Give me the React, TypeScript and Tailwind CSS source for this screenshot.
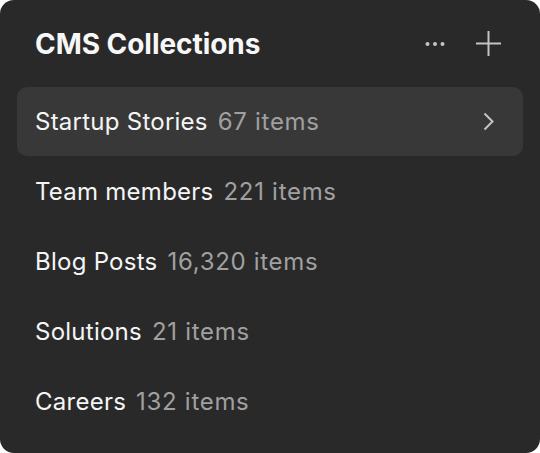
const collections = [
  { name: "Startup Stories", count: "67 items", active: true },
  { name: "Team members", count: "221 items" },
  { name: "Blog Posts", count: "16,320 items" },
  { name: "Solutions", count: "21 items" },
  { name: "Careers", count: "132 items" },
]

export default function App() {
  return (
    <div className="w-[540px] h-[453px] bg-white font-['Inter',sans-serif]">
      <div className="h-full w-full rounded-[14px] bg-[#292929] px-[17px]">
        {/* Header */}
        <div className="h-[87px] flex items-center justify-between pl-[18px] pr-[22px]">
          <h1 className="text-[28px] font-bold text-[#f7f7f7] tracking-[-0.05px]">CMS Collections</h1>
          <div className="flex items-center gap-[31px] text-[#c4c4c4]">
            <svg width="20" height="6" viewBox="0 0 20 6" fill="currentColor">
              <circle cx="2.5" cy="3" r="2" />
              <circle cx="10" cy="3" r="2" />
              <circle cx="17.5" cy="3" r="2" />
            </svg>
            <svg width="25" height="25" viewBox="0 0 25 25" stroke="currentColor" strokeWidth="2" fill="none">
              <path d="M12.5 0v25M0 12.5h25" />
            </svg>
          </div>
        </div>

        {/* List */}
        <div className="flex flex-col">
          {collections.map(c => (
            <div
              key={c.name}
              className={`flex items-center justify-between pl-[18px] pr-[29px] rounded-[10px] ${
                c.active ? "bg-[#383838] h-[69px] mb-px" : "h-[70px]"
              }`}
            >
              <div className="flex items-baseline gap-[10px] text-[24px]">
                <span className="text-[#f5f5f5] tracking-[0.25px]">{c.name}</span>
                <span className="text-[#a0a0a0] tracking-[0.7px]">{c.count}</span>
              </div>
              {c.active && (
                <svg width="11" height="19" viewBox="0 0 11 19" stroke="#c4c4c4" strokeWidth="2" fill="none">
                  <path d="M1.5 1.5l8 8-8 8" />
                </svg>
              )}
            </div>
          ))}
        </div>
      </div>
    </div>
  )
}
